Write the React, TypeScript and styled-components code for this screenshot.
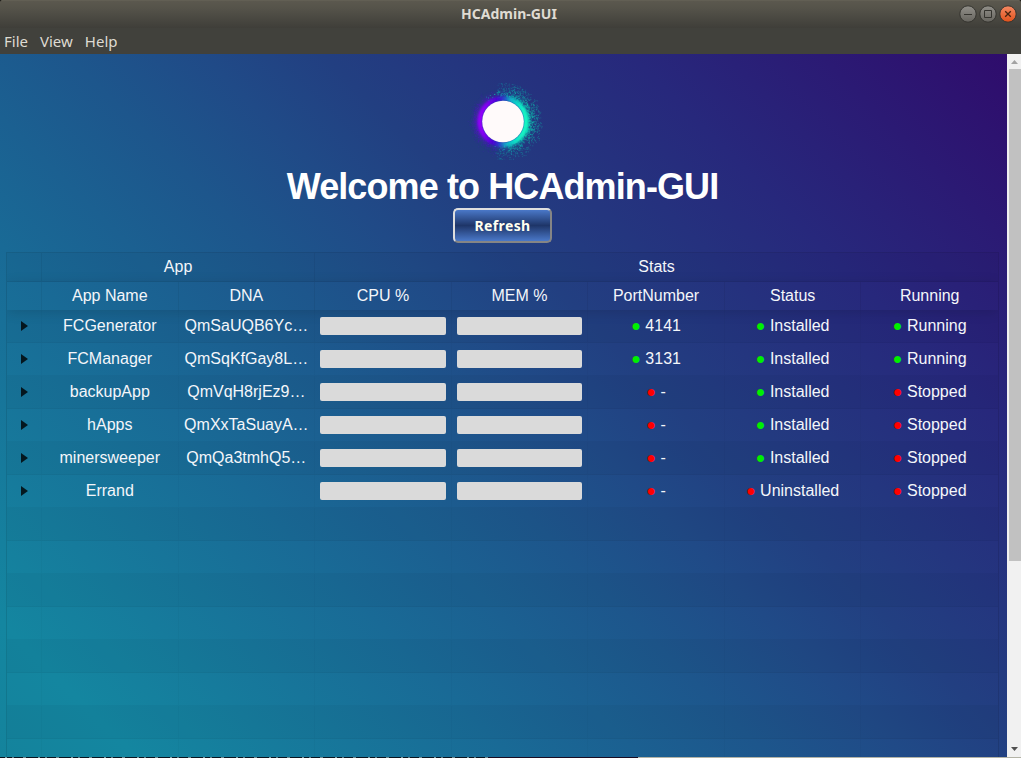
import React from 'react';
import styled, { createGlobalStyle } from 'styled-components';

const GlobalStyle = createGlobalStyle`
  * { box-sizing: border-box; }
  html, body { margin: 0; padding: 0; overflow: hidden; background: #000; }
`;

const uiFont = `'Noto Sans', 'Open Sans', sans-serif`;

const Window = styled.div`
  width: 1021px;
  height: 758px;
  display: flex;
  flex-direction: column;
  overflow: hidden;
  font-family: 'Liberation Sans', Arial, sans-serif;
`;

const TitleBar = styled.header`
  flex: none;
  height: 28px;
  display: grid;
  grid-template-columns: 80px 1fr 80px;
  align-items: center;
  background: linear-gradient(#69665a 0, #5b584e 1px, #55534a 8px, #3f3e39 28px);
  border-radius: 2px 2px 0 0;
`;

const Title = styled.h1`
  grid-column: 2;
  margin: 0;
  text-align: center;
  font: 700 14px/28px ${uiFont};
  letter-spacing: 0;
  color: #dfdbd2;
  padding-right: 3px;
`;

const Controls = styled.div`
  display: flex;
  justify-content: flex-end;
  gap: 2px;
  padding-right: 4px;
`;

const MenuBar = styled.nav`
  flex: none;
  height: 26px;
  display: flex;
  gap: 12px;
  padding-left: 4px;
  background: #41413c;
`;

const MenuItem = styled.span`
  font: 400 15px/27px ${uiFont};
  color: #dfdbd2;
`;

const Viewport = styled.div`
  flex: none;
  height: 703px;
  display: flex;
`;

const Page = styled.main`
  width: 1007px;
  height: 703px;
  overflow: hidden;
  display: flex;
  flex-direction: column;
  align-items: center;
  padding: 26px 8px 0 6px;
  background: linear-gradient(45deg, #14839c 0%, #1486a0 8%, #196a96 30%, #1d568c 45%, #204a87 53%, #223f81 60%, #27287c 78%, #2f0c6c 100%);
`;

const Heading = styled.h2`
  flex: none;
  margin: 6px 0 0;
  height: 42px;
  font-size: 36px;
  line-height: 41px;
  font-weight: 700;
  letter-spacing: -0.9px;
  color: #fff;
  white-space: nowrap;
`;

const RefreshButton = styled.button`
  flex: none;
  width: 99px;
  height: 35px;
  margin: 0 0 9px;
  padding: 0;
  border: 2px solid;
  border-color: #dedede #858585 #858585 #dedede;
  border-radius: 5px;
  background: linear-gradient(#4a78c8 0%, #1e3568 50%, #4a78c8 100%);
  color: #fffff0;
  font: 700 14px/30px ${uiFont};
  letter-spacing: 0.4px;
`;

const Table = styled.section`
  flex: none;
  width: 993px;
  height: 720px;
  overflow: hidden;
  border: 1px solid rgba(0, 0, 0, 0.1);
  color: #f4f6fa;
  font-size: 16px;
  line-height: 18px;
  text-align: center;
`;

const columns = '35px repeat(7, minmax(0, 1fr))';

const GroupHead = styled.div`
  display: grid;
  grid-template-columns: ${columns};
  height: 29px;
  background: rgba(0, 0, 0, 0.03);
  border-bottom: 1px solid rgba(0, 0, 0, 0.05);
`;

const ColumnHead = styled.div`
  display: grid;
  grid-template-columns: ${columns};
  height: 28px;
  box-shadow: 0 2px 13px 0 rgba(0, 0, 0, 0.13);
`;

const HeadCell = styled.div<{ $span?: number }>`
  grid-column: span ${(p) => p.$span ?? 1};
  padding: 5px;
  border-right: 1px solid rgba(0, 0, 0, 0.05);
  &:last-child { border-right: 0; }
`;

const Row = styled.div<{ $odd: boolean }>`
  display: grid;
  grid-template-columns: ${columns};
  height: 33px;
  background: ${(p) => (p.$odd ? 'rgba(0, 0, 0, 0.03)' : 'transparent')};
  border-bottom: 1px solid rgba(0, 0, 0, 0.03);
`;

const Cell = styled.div`
  padding: 7px 5px;
  height: 32px;
  white-space: nowrap;
  overflow: hidden;
  border-right: 1px solid rgba(0, 0, 0, 0.02);
  &:last-child { border-right: 0; }
`;

const Expander = styled.span`
  display: block;
  width: 0;
  height: 0;
  margin: 4px 0 0 9.4px;
  border-left: 7.500px solid rgba(0, 0, 0, 0.8);
  border-top: 5px solid transparent;
  border-bottom: 5px solid transparent;
`;

const Meter = styled.div`
  height: 18px;
  border-radius: 2px;
  background: #dadada;
`;

const Dot = styled.span<{ $on: boolean }>`
  color: ${(p) => (p.$on ? '#00f000' : '#ff0000')};
`;

const ScrollBar = styled.aside`
  width: 14px;
  height: 703px;
  display: flex;
  flex-direction: column;
  align-items: flex-end;
  background: #f1f1f1;
`;

const ScrollThumb = styled.div`
  width: 12px;
  height: 492px;
  margin-bottom: auto;
  background: #c1c1c1;
`;

const BackdropEdge = styled.footer`
  flex: none;
  height: 1px;
  display: grid;
  grid-template-columns: 488px 150px 1fr;
  & > :nth-child(1) {
    background: repeating-linear-gradient(90deg, #0a1520 0 5px, #7b9aa0 5px 7px, #0a1520 7px 12px, #5f7d86 12px 14px, #0a1520 14px 23px, #6d8a90 23px 26px, #0a1520 26px 33px);
  }
  & > :nth-child(2) { background: #1a0c22; }
  & > :nth-child(3) { background: #b3b3a6; }
`;

function WindowButton({ kind }: { kind: 'min' | 'max' | 'close' }) {
  const close = kind === 'close';
  return (
    <svg width="18" height="18" viewBox="0 0 18 18">
      <defs>
        <linearGradient id={`wb-${kind}`} x1="0" y1="0" x2="0" y2="1">
          <stop offset="0" stopColor={close ? '#f58a64' : '#92908a'} />
          <stop offset="1" stopColor={close ? '#e0501a' : '#66645e'} />
        </linearGradient>
      </defs>
      <circle cx="9" cy="9" r="8.200" fill={`url(#wb-${kind})`} stroke="#35342f" />
      {kind === 'min' && <path d="M5 9.5h8" stroke="#35342f" />}
      {kind === 'max' && <path d="M5.500 5.500h7v7h-7z" fill="none" stroke="#35342f" />}
      {close && <path d="M6.200 6.200l5.600 5.600M11.800 6.200l-5.600 5.600" stroke="#45230f" strokeWidth="1.300" />}
    </svg>
  );
}

function makeSpray() {
  let seed = 7;
  const rnd = () => {
    seed = (seed * 16807) % 2147483647;
    return seed / 2147483647;
  };
  const specks: { x: number; y: number; o: number; c: string }[] = [];
  for (let i = 0; i < 1500; i++) {
    const teal = i < 1000;
    const swing = (rnd() + rnd() + rnd() - 1.5) / 1.5;
    const a = teal ? -0.2 + swing * 2.3 : 3.0 + swing * 2.2;
    const spread = Math.pow(rnd(), 1.9);
    const reach = teal ? 17 : 13;
    const r = 23 + spread * reach * (0.75 + rnd() * 0.3);
    specks.push({
      x: 40 + Math.cos(a) * r,
      y: 41.5 + Math.sin(a) * r,
      o: (teal ? 0.7 : 0.4) * (1 - spread * 0.65),
      c: teal ? '#10c8b4' : '#5a10d8',
    });
  }
  // Sparse tips above and below the ring
  for (let i = 0; i < 220; i++) {
    const up = i < 130;
    const a = (up ? -1.3 : 1.3) + (rnd() - 0.5) * 0.9;
    const r = 25 + rnd() * 14;
    specks.push({
      x: 40 + Math.cos(a) * r,
      y: 41.5 + Math.sin(a) * r,
      o: 0.55 - (r - 25) * 0.022,
      c: '#109cae',
    });
  }
  return specks;
}
const spray = makeSpray();

const LogoSvg = styled.svg`
  flex: none;
`;

function Logo() {
  return (
    <LogoSvg width="80" height="80" viewBox="0 0 80 80">
      <defs>
        <linearGradient id="ring" x1="0" y1="0.42" x2="1" y2="0.52">
          <stop offset="0" stopColor="#9a00ff" />
          <stop offset="0.14" stopColor="#8400f4" />
          <stop offset="0.38" stopColor="#4208d0" />
          <stop offset="0.5" stopColor="#2450c8" />
          <stop offset="0.6" stopColor="#12a8c8" />
          <stop offset="0.8" stopColor="#10e8c8" />
          <stop offset="1" stopColor="#18f8c0" />
        </linearGradient>
        <filter id="soft" x="-30%" y="-30%" width="160%" height="160%">
          <feGaussianBlur stdDeviation="1.1" />
        </filter>
        <filter id="halo" x="-40%" y="-40%" width="180%" height="180%">
          <feGaussianBlur stdDeviation="3" />
        </filter>
      </defs>
      <circle cx="39.500" cy="41.500" r="26" fill="url(#ring)" opacity="0.600" filter="url(#halo)" />
      {spray.map((s, i) => (
        <rect key={i} x={s.x} y={s.y} width="1" height="1" fill={s.c} opacity={s.o} />
      ))}
      <circle cx="40" cy="41.500" r="25.200" fill="url(#ring)" filter="url(#soft)" />
      <circle cx="40" cy="41.500" r="21.500" fill="#2a48b0" opacity="0.550" />
      <circle cx="40" cy="41.500" r="20.800" fill="#fffafa" />
    </LogoSvg>
  );
}

interface AppRow {
  name: string;
  dna: string;
  port: string;
  installed: boolean;
  running: boolean;
}

const apps: AppRow[] = [
  { name: 'FCGenerator', dna: 'QmSaUQB6Yc…', port: '4141', installed: true, running: true },
  { name: 'FCManager', dna: 'QmSqKfGay8L…', port: '3131', installed: true, running: true },
  { name: 'backupApp', dna: 'QmVqH8rjEz9…', port: '-', installed: true, running: false },
  { name: 'hApps', dna: 'QmXxTaSuayA…', port: '-', installed: true, running: false },
  { name: 'minersweeper', dna: 'QmQa3tmhQ5…', port: '-', installed: true, running: false },
  { name: 'Errand', dna: '', port: '-', installed: false, running: false },
];

const headings = ['', 'App Name', 'DNA', 'CPU %', 'MEM %', 'PortNumber', 'Status', 'Running'];

function Indicator({ on, label }: { on: boolean; label: string }) {
  return (
    <Cell>
      <Dot $on={on}>●</Dot> {label}
    </Cell>
  );
}

export default function App() {
  return (
    <>
      <GlobalStyle />
      <Window>
        <TitleBar>
          <Title>HCAdmin-GUI</Title>
          <Controls>
            <WindowButton kind="min" />
            <WindowButton kind="max" />
            <WindowButton kind="close" />
          </Controls>
        </TitleBar>
        <MenuBar>
          <MenuItem>File</MenuItem>
          <MenuItem>View</MenuItem>
          <MenuItem>Help</MenuItem>
        </MenuBar>
        <Viewport>
          <Page>
            <Logo />
            <Heading>Welcome to HCAdmin-GUI</Heading>
            <RefreshButton>Refresh</RefreshButton>
            <Table>
              <GroupHead>
                <HeadCell />
                <HeadCell $span={2}>App</HeadCell>
                <HeadCell $span={5}>Stats</HeadCell>
              </GroupHead>
              <ColumnHead>
                {headings.map((h, i) => (
                  <HeadCell key={i}>{h}</HeadCell>
                ))}
              </ColumnHead>
              {apps.map((app, i) => (
                <Row key={app.name} $odd={i % 2 === 0}>
                  <Cell><Expander /></Cell>
                  <Cell>{app.name}</Cell>
                  <Cell>{app.dna}</Cell>
                  <Cell><Meter /></Cell>
                  <Cell><Meter /></Cell>
                  <Indicator on={app.port !== '-'} label={app.port} />
                  <Indicator on={app.installed} label={app.installed ? 'Installed' : 'Uninstalled'} />
                  <Indicator on={app.running} label={app.running ? 'Running' : 'Stopped'} />
                </Row>
              ))}
              {Array.from({ length: 8 }, (_, i) => (
                <Row key={i} $odd={i % 2 === 0}>
                  {headings.map((_, c) => (
                    <Cell key={c} />
                  ))}
                </Row>
              ))}
            </Table>
          </Page>
          <ScrollBar>
            <svg width="14" height="15" viewBox="0 0 14 15">
              <path d="M4 10h7L7.500 6z" fill="#a3a3a3" />
            </svg>
            <ScrollThumb />
            <svg width="14" height="15" viewBox="0 0 14 15">
              <path d="M4 5h7L7.500 9z" fill="#505050" />
            </svg>
          </ScrollBar>
        </Viewport>
        <BackdropEdge>
          <span />
          <span />
          <span />
        </BackdropEdge>
      </Window>
    </>
  );
}
